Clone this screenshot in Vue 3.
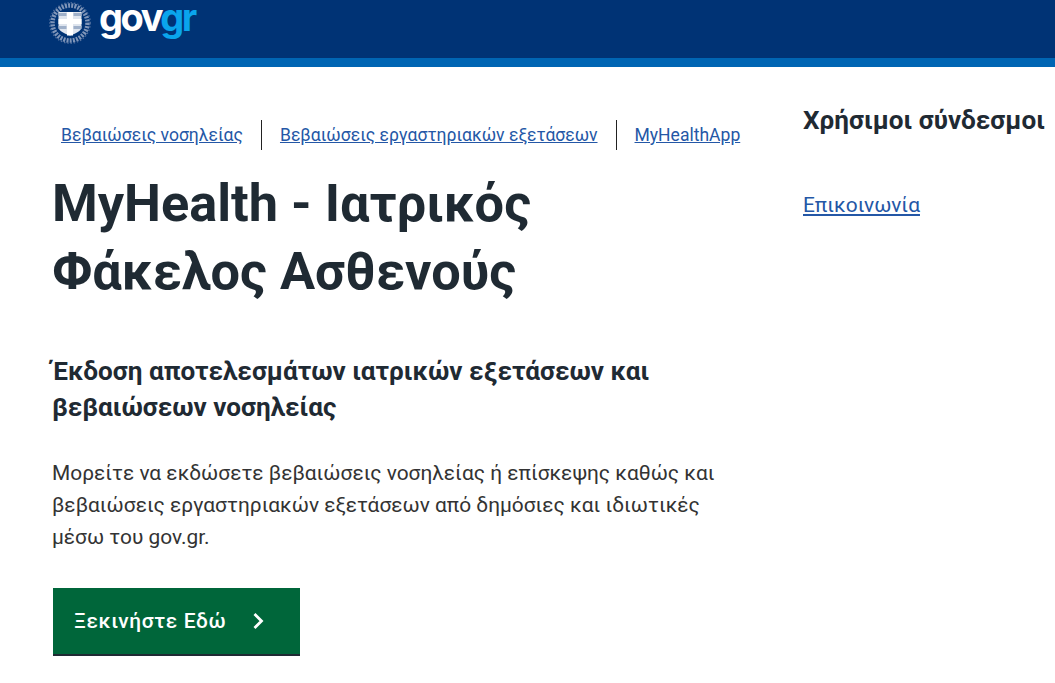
<script setup>
const links = ['Βεβαιώσεις νοσηλείας', 'Βεβαιώσεις εργαστηριακών εξετάσεων', 'MyHealthApp']
</script>

<template>
  <div class="page">
    <header class="header">
      <svg class="emblem" width="42" height="44" viewBox="0 0 42 44">
        <circle cx="21" cy="22" r="17.500" fill="none" stroke="#7f95b8" stroke-width="4.500" stroke-dasharray="2 1.200" />
        <circle cx="21" cy="22" r="20.300" fill="none" stroke="#506f9e" stroke-width="1.200" stroke-dasharray="1.500 1.800" />
        <path d="M9.500 11h23v15c0 4-6 6.500-11.500 8.500-5.500-2-11.500-4.500-11.500-8.500z" fill="#dfe5ee" />
        <path d="M9.500 13.500h8M24.500 13.500h8M9.500 26.500h8M24.500 26.500h8" stroke="#9fb0c9" stroke-width="3" fill="none" />
        <path d="M9.500 18h8.500v-7h6v7h8.500v5h-8.500v11.500h-6V23h-8.500z" fill="#fff" />
      </svg>
      <span class="logo">gov<span class="logo-accent">gr</span></span>
    </header>
    <main class="main">
      <section class="content">
        <nav class="links">
          <a v-for="l in links" :key="l" class="link" href="#">{{ l }}</a>
        </nav>
        <h1 class="title">MyHealth - Ιατρικός<br>Φάκελος Ασθενούς</h1>
        <h2 class="subtitle">Έκδοση αποτελεσμάτων ιατρικών εξετάσεων και<br>βεβαιώσεων νοσηλείας</h2>
        <p class="text">Μορείτε να εκδώσετε βεβαιώσεις νοσηλείας ή επίσκεψης καθώς και<br>βεβαιώσεις εργαστηριακών εξετάσεων από δημόσιες και ιδιωτικές<br>μέσω του gov.gr.</p>
        <a class="button" href="#">
          <span>Ξεκινήστε Εδώ</span>
          <svg width="14" height="18" viewBox="0 0 14 18"><path d="M2.500 2l7 7-7 7" fill="none" stroke="#fff" stroke-width="2.800" /></svg>
        </a>
      </section>
      <aside class="aside">
        <h3 class="aside-title">Χρήσιμοι σύνδεσμοι</h3>
        <a class="aside-link" href="#">Επικοινωνία</a>
      </aside>
    </main>
  </div>
</template>

<style>
html, body { margin: 0; background: #fff; overflow: hidden; }
</style>

<style scoped>
.page { width: 1055px; height: 683px; overflow: hidden; font-family: Roboto, "Noto Sans", sans-serif; color: #1f2a33; }
.header { box-sizing: border-box; background: #003375; border-bottom: 9px solid #0065b3; height: 67px; display: flex; align-items: flex-start; padding-left: 49px; gap: 8px; }
.emblem { margin-top: 1px; }
.logo { font-family: Inter, Roboto, sans-serif; font-weight: 700; font-size: 38px; line-height: 35px; color: #fff; letter-spacing: -2.500px; }
.logo-accent { color: #0aa5ec; }
.main { display: flex; }
.content { width: 750px; padding-left: 52px; box-sizing: border-box; flex: none; }
.links { display: flex; align-items: center; height: 30px; margin-top: 53px; padding-left: 9px; }
.link { font-size: 17.550px; color: #2457a6; text-decoration: underline; padding-right: 18px; margin-right: 18px; border-right: 1px solid #222; line-height: 30px; }
.link:last-child { border: 0; padding: 0; margin: 0; }
.title { margin: 19px 0 0; font-size: 52.300px; line-height: 68px; font-weight: 700; }
.subtitle { margin: 48px 0 0; font-size: 26.100px; line-height: 36px; font-weight: 700; }
.text { margin: 32px 0 0; font-size: 20.900px; line-height: 32px; font-weight: 400; color: #333; }
.button { margin: 35px 0 0 1px; width: 247px; height: 68px; box-sizing: border-box; background: #00663a; border-bottom: 2px solid #1f2a33; color: #fff; display: flex; align-items: center; gap: 26px; padding-left: 21px; text-decoration: none; font-size: 20.900px; font-weight: 500; letter-spacing: 0.600px; }
.aside { margin-left: 53px; padding-top: 38px; flex: none; }
.aside-title { margin: 0; font-size: 26.100px; line-height: 30px; font-weight: 700; white-space: nowrap; }
.aside-link { display: block; margin-top: 55px; font-size: 20.900px; line-height: 30px; color: #2457a6; text-decoration: underline; }
</style>
